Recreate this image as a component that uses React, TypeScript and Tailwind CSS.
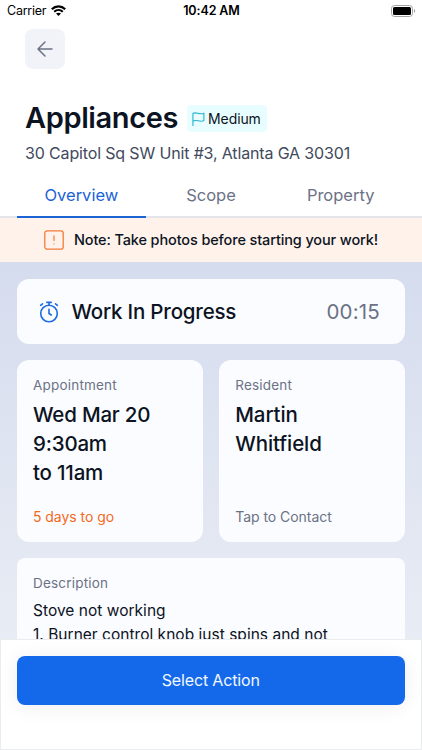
import type { ReactNode } from 'react';

const tabs = [
  { label: 'Overview', active: true },
  { label: 'Scope', active: false },
  { label: 'Property', active: false },
];

function StatusBar() {
  return (
    <div className="grid h-[22px] shrink-0 grid-cols-3 items-center pl-[7px] pr-1.5 text-black">
      <div className="flex items-center gap-[5px]">
        <span className="text-[12.5px] leading-[22px] tracking-[-0.25px]">Carrier</span>
        <svg className="-mt-0.5 h-[11px] w-[15px]" viewBox="0 0 15 11" fill="none" stroke="currentColor">
          <path d="M0.8 4.2C4.6 0.4 10.4 0.4 14.2 4.2" strokeWidth="2.2" />
          <path d="M3.2 6.8C5.7 4.4 9.3 4.4 11.8 6.8" strokeWidth="2" />
          <path d="M7.5 11L5 8.6C6.4 7.4 8.6 7.4 10 8.6Z" fill="currentColor" stroke="none" />
        </svg>
      </div>
      <span className="text-center text-[12.5px] font-semibold leading-[22px] tracking-[-0.1px]">10:42 AM</span>
      <svg className="-mt-px h-3 w-[25px] justify-self-end" viewBox="0 0 25 12">
        <rect x="0.5" y="0.5" width="21" height="11" rx="3" fill="none" stroke="#a3a3a3" />
        <rect x="2" y="2" width="18" height="8" rx="1.5" />
        <path d="M23 4C24.6 4.6 24.6 7.4 23 8Z" fill="#a3a3a3" />
      </svg>
    </div>
  );
}

function Card({ title, children, className = '' }: { title: string; children: ReactNode; className?: string }) {
  return (
    <div className={`flex flex-col bg-[#fbfcff] px-[16.5px] pt-4 ${className}`}>
      <span className="text-[13.5px] leading-[18px] tracking-[0.2px] text-[#6b7285]">{title}</span>
      {children}
    </div>
  );
}

export default function App() {
  return (
    <div className="flex h-[750px] w-[422px] flex-col overflow-hidden bg-white font-['Inter',sans-serif] text-[#0c1322]">
      <StatusBar />

      <header className="h-[151px] shrink-0 px-[25px] pt-[7px]">
        <button className="flex size-10 items-center justify-center rounded-lg bg-[#f1f3f8] text-[#6b7285]">
          <svg className="size-5" viewBox="0 0 20 20" fill="none" stroke="currentColor" strokeWidth="1.5" strokeLinecap="round" strokeLinejoin="round">
            <path d="M17 10H3M10 3L3 10L10 17" />
          </svg>
        </button>
        <div className="mt-[31px] flex items-center gap-[9px]">
          <h1 className="text-[29px] font-semibold leading-9 tracking-[-0.38px] whitespace-nowrap">Appliances</h1>
          <div className="mt-px flex h-[27px] w-20 items-center gap-[3px] rounded bg-[#e8fdff] pl-[5px]">
            <svg className="h-4 w-[13px] shrink-0" viewBox="0 0 14 16" fill="none" stroke="#28b5d2" strokeWidth="1.2" strokeLinecap="round" strokeLinejoin="round">
              <path d="M1 15V2C4.5 -0.4 8 4 12.8 1.7V9.7C8.5 12 5 8 1 10.2" />
            </svg>
            <span className="text-[14px] leading-5 tracking-[-0.1px]">Medium</span>
          </div>
        </div>
        <p className="mt-[7px] text-[16px] leading-5 tracking-[-0.15px] whitespace-nowrap text-[#414a5d]">
          30 Capitol Sq SW Unit #3, Atlanta GA 30301
        </p>
      </header>

      <nav className="flex h-[45px] shrink-0 border-b-2 border-[#e4e6eb] px-[16.5px]">
        {tabs.map((tab) => (
          <div
            key={tab.label}
            className={`-mb-0.5 flex flex-1 items-center justify-center border-b-2 pt-px text-[16.5px] ${
              tab.active ? 'border-[#1c63d6] text-[#1c63d6]' : 'border-transparent text-[#6b7285]'
            }`}
          >
            {tab.label}
          </div>
        ))}
      </nav>

      <div className="flex h-11 shrink-0 items-center justify-center gap-[10px] bg-[#fff2ea]">
        <svg className="size-5" viewBox="0 0 20 20" fill="none" stroke="#f47b3a" strokeLinecap="round">
          <rect x="0.8" y="0.8" width="18.4" height="18.4" rx="2.5" strokeWidth="1.3" />
          <path d="M10 5.8V10.6M10 13.8V14" strokeWidth="1.2" />
        </svg>
        <span className="text-[14.5px] font-medium tracking-[-0.13px] whitespace-nowrap">
          Note: Take photos before starting your work!
        </span>
      </div>

      <main className="flex min-h-0 flex-1 flex-col gap-4 overflow-hidden bg-linear-to-b from-[#d5dcee] to-[#e8ecf4] pt-[17px] pl-[16.5px] pr-[17px]">
        <div className="flex h-[65px] shrink-0 items-center rounded-xl bg-[#fbfcff] pl-[21.5px] pr-[25px] text-[20.5px]">
          <svg className="size-[22px]" viewBox="0 0 22 22" fill="none" stroke="#1c6be0" strokeWidth="1.6" strokeLinecap="round" strokeLinejoin="round">
            <circle cx="11" cy="12.5" r="8.3" />
            <path d="M11 8.3V12.5L13.3 14M8.8 1.4H13.2M11 1.4V4M2.6 4.3L4.5 2.8M19.4 4.3L17.5 2.8" />
          </svg>
          <span className="ml-[11.5px] mt-px font-medium tracking-[-0.2px]">Work In Progress</span>
          <span className="ml-auto mt-px tracking-[0.2px] text-[#6b7285]">00:15</span>
        </div>

        <div className="grid h-[182px] shrink-0 grid-cols-2 gap-4">
          <Card title="Appointment" className="rounded-xl">
            <p className="mt-1.5 text-[20.5px] font-medium leading-[29px] tracking-[-0.2px]">
              Wed Mar 20
              <br />
              9:30am
              <br />
              to 11am
            </p>
            <span className="mt-auto mb-4 text-[14px] leading-[18px] tracking-[-0.05px] text-[#f26a1b]">5 days to go</span>
          </Card>
          <Card title="Resident" className="rounded-xl">
            <p className="mt-1.5 text-[20.5px] font-medium leading-[29px] tracking-[-0.1px]">
              Martin
              <br />
              Whitfield
            </p>
            <span className="mt-auto mb-4 text-[14px] leading-[18px] tracking-[-0.05px] text-[#6b7285]">Tap to Contact</span>
          </Card>
        </div>

        <Card title="Description" className="h-[140px] shrink-0 rounded-lg">
          <p className="mt-[7px] text-[15.5px] leading-6 tracking-[0.02px] whitespace-nowrap">
            Stove not working
            <br />
            1. Burner control knob just spins and not
          </p>
        </Card>
      </main>

      <footer className="h-[111px] shrink-0 border border-[#ebecee] bg-white pt-4 pl-[15.5px] pr-4">
        <button className="h-[49px] w-full rounded-lg bg-[#1469eb] pb-px text-[16px] tracking-[-0.15px] text-[#f2f8ff] shadow-[0_2px_20px_rgba(0,0,0,0.07)]">
          Select Action
        </button>
      </footer>
    </div>
  );
}
